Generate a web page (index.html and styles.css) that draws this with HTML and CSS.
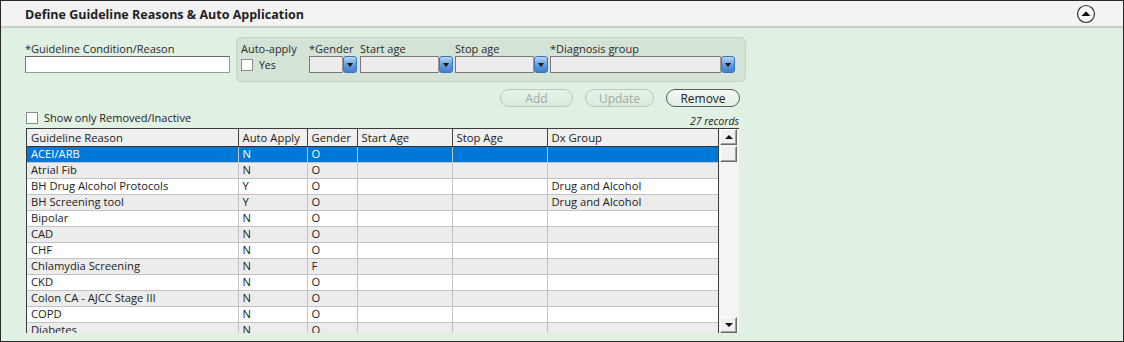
FILE: index.html
```html
<!DOCTYPE html>
<html>
<head>
<meta charset="utf-8">
<link rel="stylesheet" href="styles.css">
</head>
<body>
<div class="panel">
  <div class="hdr">
    <h1 class="title">Define Guideline Reasons &amp; Auto Application</h1>
    <span class="collapse"><svg width="20" height="20" viewBox="0 0 20 20"><circle cx="10" cy="10" r="8.5" fill="#f7f7f7" stroke="#333" stroke-width="1.2"/><path d="M5.5 12 L10 7.2 L14.5 12 Z" fill="#111"/></svg></span>
  </div>
  <div class="content">
    <div class="form">
      <div class="row1">
        <div class="field reason">
          <span class="lbl">*Guideline Condition/Reason</span>
          <span class="textbox"></span>
        </div>
        <div class="group">
          <div class="field auto">
            <span class="lbl">Auto-apply</span>
            <span class="chk"><span class="box"></span><span class="chklbl">Yes</span></span>
          </div>
          <div class="field f-gender">
            <span class="lbl">*Gender</span>
            <span class="select"><span class="sbox"></span><span class="sbtn"><i></i></span></span>
          </div>
          <div class="field f-age">
            <span class="lbl">Start age</span>
            <span class="select"><span class="sbox"></span><span class="sbtn"><i></i></span></span>
          </div>
          <div class="field f-age">
            <span class="lbl">Stop age</span>
            <span class="select"><span class="sbox"></span><span class="sbtn"><i></i></span></span>
          </div>
          <div class="field f-dx">
            <span class="lbl">*Diagnosis group</span>
            <span class="select"><span class="sbox"></span><span class="sbtn"><i></i></span></span>
          </div>
        </div>
      </div>
      <div class="btnrow">
        <span class="btn b-add disabled">Add</span>
        <span class="btn b-upd disabled">Update</span>
        <span class="btn b-rem">Remove</span>
      </div>
      <div class="inforow">
        <span class="chk showonly"><span class="box"></span><span class="chklbl">Show only Removed/Inactive</span></span>
        <span class="records">27 records</span>
      </div>
      <div class="grid">
        <div class="gridview">
          <table class="tbl">
            <colgroup>
              <col class="c1"><col class="c2"><col class="c3"><col class="c4"><col class="c5"><col class="c6">
            </colgroup>
            <thead>
              <tr><th>Guideline Reason</th><th>Auto Apply</th><th>Gender</th><th>Start Age</th><th>Stop Age</th><th>Dx Group</th></tr>
            </thead>
            <tbody>
              <tr class="sel"><td>ACEI/ARB</td><td>N</td><td>O</td><td></td><td></td><td></td></tr>
              <tr class="alt"><td>Atrial Fib</td><td>N</td><td>O</td><td></td><td></td><td></td></tr>
              <tr><td>BH Drug Alcohol Protocols</td><td>Y</td><td>O</td><td></td><td></td><td>Drug and Alcohol</td></tr>
              <tr class="alt"><td>BH Screening tool</td><td>Y</td><td>O</td><td></td><td></td><td>Drug and Alcohol</td></tr>
              <tr><td>Bipolar</td><td>N</td><td>O</td><td></td><td></td><td></td></tr>
              <tr class="alt"><td>CAD</td><td>N</td><td>O</td><td></td><td></td><td></td></tr>
              <tr><td>CHF</td><td>N</td><td>O</td><td></td><td></td><td></td></tr>
              <tr class="alt"><td>Chlamydia Screening</td><td>N</td><td>F</td><td></td><td></td><td></td></tr>
              <tr><td>CKD</td><td>N</td><td>O</td><td></td><td></td><td></td></tr>
              <tr class="alt"><td>Colon CA - AJCC Stage III</td><td>N</td><td>O</td><td></td><td></td><td></td></tr>
              <tr><td>COPD</td><td>N</td><td>O</td><td></td><td></td><td></td></tr>
              <tr class="alt"><td>Diabetes</td><td>N</td><td>O</td><td></td><td></td><td></td></tr>
            </tbody>
          </table>
        </div>
        <div class="vscroll">
          <span class="sb-btn"><i class="up"></i></span>
          <span class="sb-thumb"></span>
          <span class="sb-track"></span>
          <span class="sb-btn"><i class="down"></i></span>
        </div>
      </div>
    </div>
  </div>
</div>
</body>
</html>
```

FILE: styles.css
```css
* { box-sizing: border-box; }
html, body { margin: 0; padding: 0; }
body {
  width: 1124px;
  height: 342px;
  font-family: "Open Sans", "Noto Sans", "DejaVu Sans", sans-serif;
  font-size: 11px;
  color: #222;
  background: #fff;
}
.panel {
  width: 1124px;
  height: 342px;
  border: 1px solid #2a2a2a;
  background: #e0f0e2;
  display: flex;
  flex-direction: column;
  overflow: hidden;
}
.hdr {
  height: 26px;
  flex: 0 0 26px;
  background: #f3f3f3;
  border-bottom: 1px solid #c9cec9;
  box-shadow: 0 1px 1px rgba(0,0,0,0.12);
  display: flex;
  align-items: center;
  justify-content: space-between;
  padding: 0 27px 0 24px;
}
.title {
  margin: 2px 0 0 0;
  font-size: 12.5px;
  font-weight: bold;
  color: #222;
}
.collapse { display: flex; width: 20px; height: 20px; }
.content { padding: 10px 0 0 24px; }
.form { width: 721px; display: flex; flex-direction: column; }
.row1 { display: flex; align-items: flex-start; }
.field { display: flex; flex-direction: column; }
.lbl { height: 15px; line-height: 16px; white-space: nowrap; color: #2a2a2a; }
.reason { width: 205px; margin-right: 6px; padding-top: 4px; }
.textbox {
  display: block;
  height: 17px;
  width: 205px;
  background: #fff;
  border: 1px solid #9a9a9a;
  border-top-color: #6a6a6a;
  border-left-color: #7a7a7a;
}
.group {
  width: 510px;
  height: 45px;
  background: #d5e3d6;
  border: 1px solid #c6d4c7;
  border-radius: 5px;
  padding: 3px 4px 0 4px;
  display: flex;
  align-items: flex-start;
}
.auto { width: 68px; }
.chk { display: flex; align-items: center; height: 17px; }
.box {
  width: 12px; height: 12px;
  background: #fff;
  border: 1px solid #8a8a8a;
  display: inline-block;
}
.chklbl { margin-left: 6px; }
.auto .chklbl { margin-left: 6px; font-size: 10.5px; }
.f-gender { width: 48px; margin-right: 3px; }
.f-age { width: 93px; margin-right: 2px; }
.f-dx { width: 185px; }
.select { display: flex; height: 17px; }
.sbox {
  flex: 1;
  background: #ececec;
  border: 1px solid #7a7a7a;
  border-right-color: #9a9a9a;
}
.sbtn {
  width: 14px;
  height: 17px;
  border: 1px solid #3a72b8;
  border-radius: 3px;
  background: linear-gradient(#b8d6f4, #5d9be0 55%, #3f80cf);
  display: flex;
  align-items: center;
  justify-content: center;
}
.sbtn i {
  width: 0; height: 0;
  border-left: 3px solid transparent;
  border-right: 3px solid transparent;
  border-top: 4px solid #111;
}
.btnrow {
  display: flex;
  justify-content: flex-end;
  margin-top: 7px;
  width: 715px;
  height: 18px;
}
.btn {
  height: 18px;
  border-radius: 9px;
  border: 1px solid #5a5a5a;
  background: linear-gradient(#f4f9f4, #e2eee3);
  display: flex;
  align-items: center;
  justify-content: center;
  font-size: 12px;
  color: #222;
  margin-left: 12px;
}
.btn.disabled { border-color: #b9c9ba; color: #a3aaa3; background: linear-gradient(#e6f2e7, #dcebdd); }
.b-add { width: 73px; }
.b-upd { width: 69px; }
.b-rem { width: 74px; }
.inforow {
  width: 714px;
  height: 21px;
  display: flex;
  justify-content: space-between;
  align-items: flex-start;
  padding-left: 1px;
}
.showonly { margin-top: 4px; height: 13px; }
.showonly .chklbl { margin-left: 6px; }
.records { font-style: italic; font-size: 10.5px; margin-top: 7px; line-height: 14px; }
.grid {
  margin-left: 1px;
  width: 713px;
  height: 205px;
  border-top: 1px solid #3a3a3a;
  border-left: 1px solid #3a3a3a;
  display: flex;
  background: #f6f6f6;
}
.gridview {
  width: 692px;
  height: 204px;
  overflow: hidden;
  border-right: 1px solid #3a3a3a;
  background: #fff;
}
.tbl {
  width: 692px;
  table-layout: fixed;
  border-collapse: collapse;
  border-spacing: 0;
}
.c1 { width: 211px; }
.c2 { width: 69px; }
.c3 { width: 50px; }
.c4 { width: 95px; }
.c5 { width: 95px; }
.c6 { width: 172px; }
.tbl th {
  height: 17px;
  padding: 0 0 0 4px;
  text-align: left;
  font-weight: normal;
  font-size: 11.3px;
  line-height: 15px;
  background: #efefef;
  border-right: 1px solid #444;
  border-bottom: 1px solid #333;
  white-space: nowrap;
  overflow: hidden;
}
.tbl th:last-child { border-right: none; }
.tbl td {
  height: 16px;
  padding: 0 0 1px 4px;
  font-size: 11.2px;
  line-height: 14px;
  border-right: 1px solid #c3c3c3;
  border-bottom: 1px solid #c3c3c3;
  white-space: nowrap;
  overflow: hidden;
}
.tbl td:last-child { border-right: none; }
.tbl tr.alt td { background: #ececec; }
.tbl tr.sel td { background: #0078d7; color: #fff; }
.vscroll {
  width: 19px;
  height: 204px;
  display: flex;
  flex-direction: column;
  padding: 0 1px 0 1px;
  background-color: #f4f4f4;
  background-image: radial-gradient(#e2e2e2 0.6px, transparent 0.7px);
  background-size: 2px 2px;
}
.sb-btn, .sb-thumb {
  height: 16px;
  flex: 0 0 16px;
  background: #f0f0f0;
  border: 1px solid;
  border-color: #fff #6a6a6a #6a6a6a #fff;
  box-shadow: inset -1px -1px 0 #a0a0a0;
  display: flex;
  align-items: center;
  justify-content: center;
}
.sb-thumb { margin-top: 1px; }
.sb-track { flex: 1; }
.sb-btn .up {
  width: 0; height: 0;
  border-left: 4px solid transparent;
  border-right: 4px solid transparent;
  border-bottom: 4px solid #111;
}
.sb-btn .down {
  width: 0; height: 0;
  border-left: 4px solid transparent;
  border-right: 4px solid transparent;
  border-top: 4px solid #111;
}
```
